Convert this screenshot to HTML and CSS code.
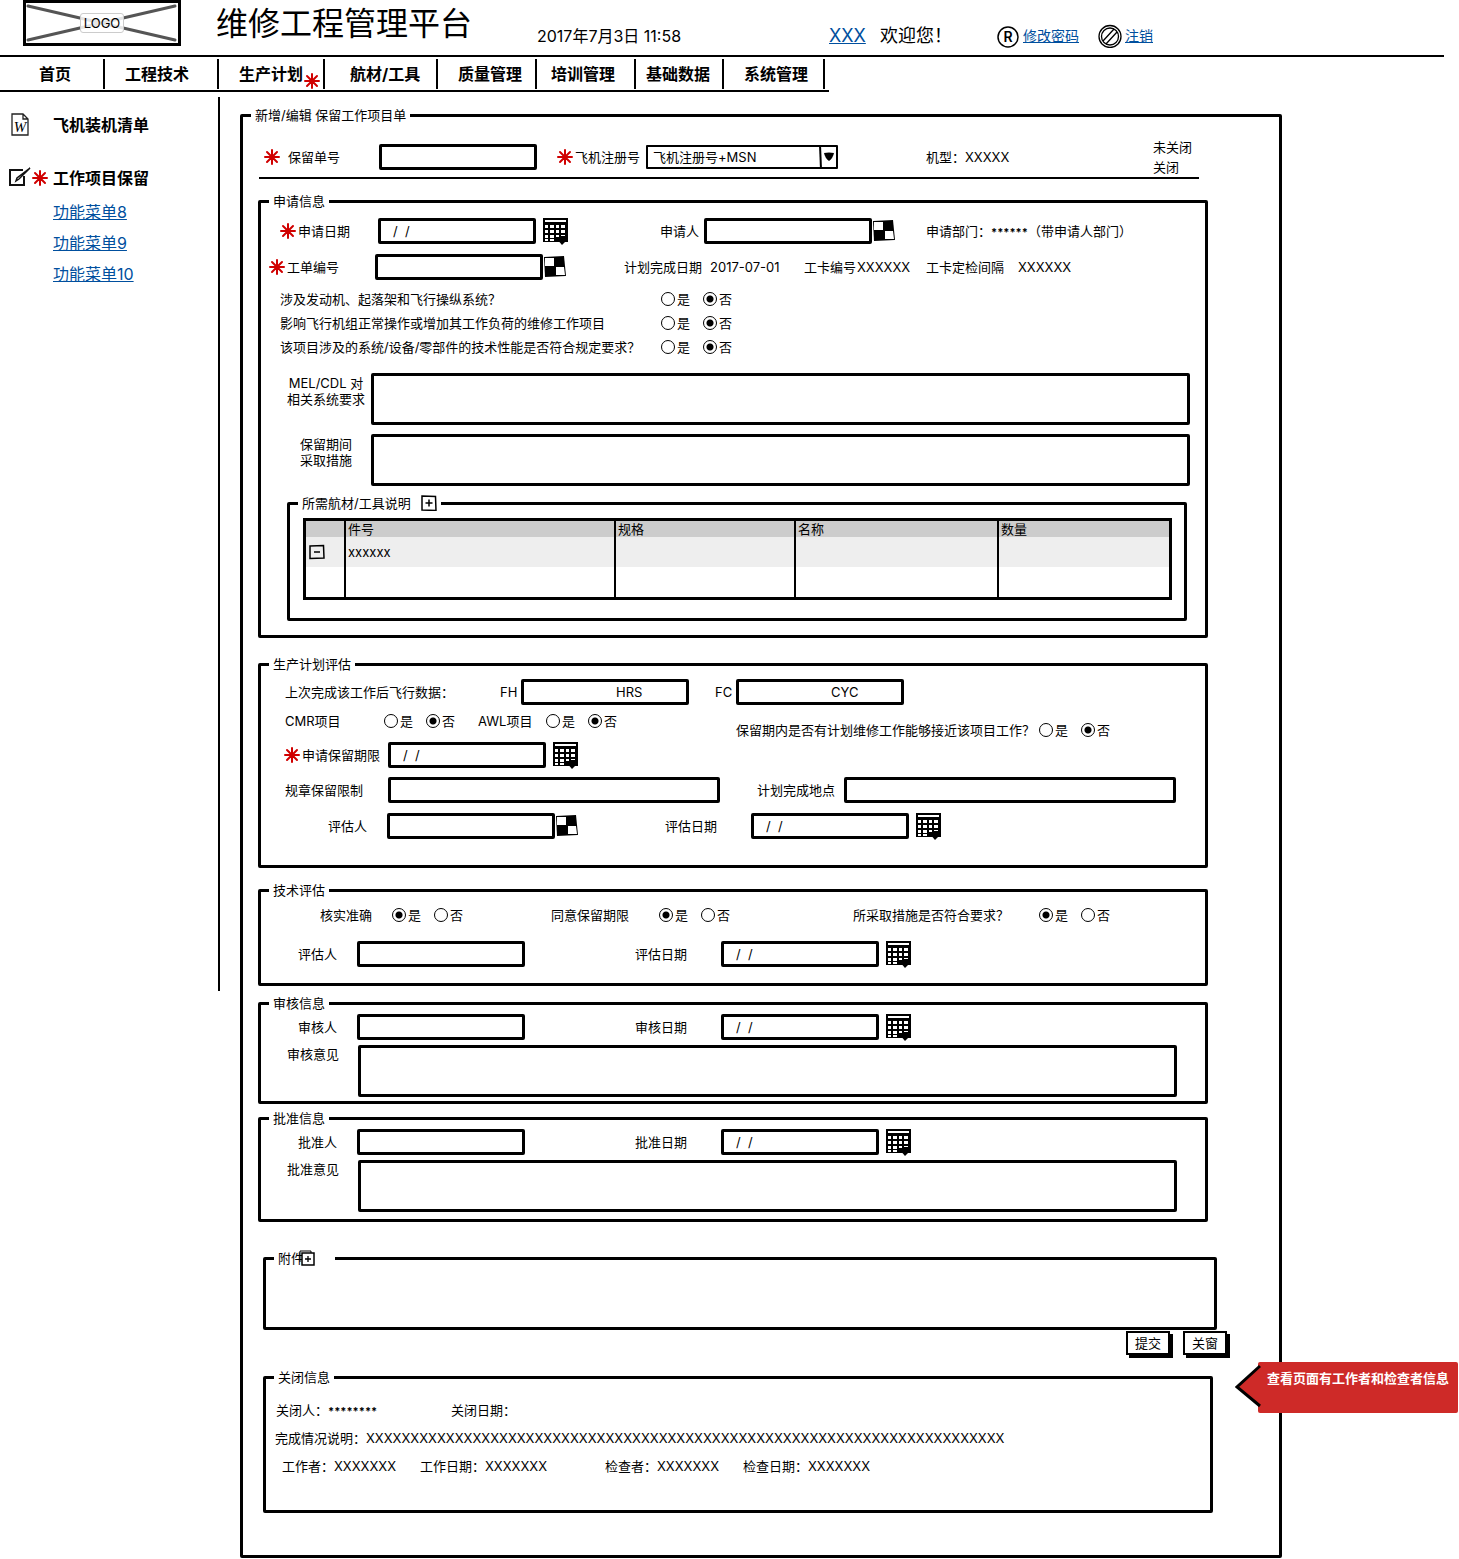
FILE: index.html
```html
<!DOCTYPE html>
<html lang="zh-CN">
<head>
<meta charset="utf-8">
<title>维修工程管理平台</title>
<link rel="stylesheet" href="styles.css">
</head>
<body>
<svg class="defs" aria-hidden="true">
  <symbol id="star" viewBox="0 0 16 16"><path d="M8 1v14M1 8h14M3 3l10 10M13 3L3 13" fill="none" stroke="#d00000" stroke-width="2" stroke-linecap="round"/></symbol>
  <symbol id="calendar" viewBox="0 0 26 28">
    <path d="M0 1h25v24H0z" fill="#000"/>
    <path d="M2 3h21v2H2z" fill="#fff"/>
    <path d="M2 8h3v3H2zM7 8h4v3H7zM13 8h3v3h-3zM18 8h4v3h-4zM2 13h3v3H2zM7 13h4v3H7zM13 13h3v3h-3zM18 13h4v3h-4zM2 18h3v3H2zM7 18h4v3H7zM13 18h3v2h-3zM18 18h4v1h-4zM2 22h3v2H2zM7 22h4v2H7z" fill="#fff"/>
    <path d="M13 21l8-2 4 3-6 6z" fill="#000"/>
  </symbol>
  <symbol id="checker" viewBox="0 0 22 22">
    <path d="M0 1l20-1 2 20-21 1z" fill="#000"/>
    <path d="M1 2h9v8H1zM12 11h8l1 8h-9z" fill="#fff"/>
  </symbol>
  <symbol id="plus" viewBox="0 0 16 16"><path d="M1 1l13.500.5.5 14-14-.5zM8 4.500v7M4.500 8h7" fill="none" stroke="#000" stroke-width="1.500"/></symbol>
  <symbol id="minus" viewBox="0 0 16 16"><path d="M1 2l13.500-.5.5 12.500-14 .5zM5 8h6" fill="none" stroke="#000" stroke-width="1.500"/></symbol>
</svg>

<header class="top">
  <div class="logo">
    <svg viewBox="0 0 158 46" preserveAspectRatio="none" aria-hidden="true">
      <rect x="1.500" y="1.500" width="155" height="43" fill="#fff" stroke="#000" stroke-width="3"/>
      <path d="M5 6l147 34M5 40L152 6" stroke="#555" stroke-width="3" stroke-linecap="round"/>
    </svg>
    <span>LOGO</span>
  </div>
  <h1>维修工程管理平台</h1>
  <time>2017年7月3日 11:58</time>
  <a class="user" href="#">XXX</a>
  <span class="welcome">欢迎您！</span>
  <svg class="round" viewBox="0 0 24 24" aria-hidden="true"><circle cx="11" cy="13" r="10" fill="none" stroke="#000" stroke-width="1.500"/><text x="11" y="18" text-anchor="middle" font-size="14" font-weight="600">R</text></svg>
  <a class="action" href="#">修改密码</a>
  <svg class="round" viewBox="0 0 24 24" aria-hidden="true"><g fill="none" stroke="#000" stroke-width="1.300"><circle cx="12" cy="12.500" r="11"/><circle cx="12" cy="12.500" r="8.500"/><path d="M5 17L16 5M8 20L19 8"/></g></svg>
  <a class="action" href="#">注销</a>
</header>

<nav class="menu">
  <a href="#">首页</a>
  <a href="#">工程技术</a>
  <a href="#">生产计划<svg class="star mark"><use href="#star"/></svg></a>
  <a href="#">航材/工具</a>
  <a href="#">质量管理</a>
  <a href="#">培训管理</a>
  <a href="#">基础数据</a>
  <a href="#">系统管理</a>
</nav>

<div class="body">
  <aside class="side">
    <div class="side-item">
      <svg class="side-icon" viewBox="0 0 24 24" aria-hidden="true"><path d="M4 1h11l5 5v16H4zM15 1v5h5" fill="none" stroke="#222" stroke-width="1.300"/><text x="12" y="19" text-anchor="middle" font-size="15" font-style="italic" font-family="Liberation Serif, serif">W</text></svg>
      <b>飞机装机清单</b>
    </div>
    <div class="side-item">
      <svg class="side-icon" viewBox="0 0 24 24" aria-hidden="true"><path d="M15 4H2v15h14v-9" fill="none" stroke="#111" stroke-width="2"/><path d="M22 2L11 13l-3 2 1-3z" fill="none" stroke="#111" stroke-width="1.500"/></svg>
      <svg class="star"><use href="#star"/></svg>
      <b>工作项目保留</b>
    </div>
    <a href="#">功能菜单8</a>
    <a href="#">功能菜单9</a>
    <a href="#">功能菜单10</a>
  </aside>

  <form class="main">
    <fieldset class="sheet">
      <legend>新增/编辑 保留工作项目单</legend>

      <div class="row summary">
        <label class="req wide" for="no"><svg class="star"><use href="#star"/></svg>保留单号</label>
        <input id="no" class="w-date" type="text">
        <label class="req" for="reg"><svg class="star"><use href="#star"/></svg>飞机注册号</label>
        <span class="select">
          <select id="reg"><option>飞机注册号+MSN</option></select>
          <svg viewBox="0 0 19 24" aria-hidden="true"><path d="M1 0l1 24" stroke="#000" stroke-width="2"/><path d="M5 8q5-1 10 0-1 5-5 8-4-3-5-8z"/></svg>
        </span>
        <span>机型：XXXXX</span>
        <span class="status">未关闭<br>关闭</span>
      </div>

      <fieldset class="panel apply">
        <legend>申请信息</legend>
        <div class="row apply-date">
          <label class="req" for="ad"><svg class="star"><use href="#star"/></svg>申请日期</label>
          <input id="ad" class="w-date" type="text" value="/  /">
          <button type="button" class="icon" aria-label="选择日期"><svg class="cal"><use href="#calendar"/></svg></button>
          <label for="ap">申请人</label>
          <input id="ap" class="w-text" type="text">
          <button type="button" class="icon" aria-label="选择人员"><svg class="chk"><use href="#checker"/></svg></button>
          <span>申请部门：<b class="masked">******</b>（带申请人部门）</span>
        </div>
        <div class="row apply-order">
          <label class="req" for="on"><svg class="star"><use href="#star"/></svg>工单编号</label>
          <input id="on" class="w-text" type="text">
          <button type="button" class="icon" aria-label="选择工单"><svg class="chk"><use href="#checker"/></svg></button>
          <span>计划完成日期</span><span>2017-07-01</span>
          <span>工卡编号</span><span>XXXXXX</span>
          <span>工卡定检间隔</span><span>XXXXXX</span>
        </div>
        <div class="questions">
          <div class="row question"><span>涉及发动机、起落架和飞行操纵系统？</span>
            <span class="yn"><label><input type="radio" name="q1">是</label><label><input type="radio" name="q1" checked>否</label></span></div>
          <div class="row question"><span>影响飞行机组正常操作或增加其工作负荷的维修工作项目</span>
            <span class="yn"><label><input type="radio" name="q2">是</label><label><input type="radio" name="q2" checked>否</label></span></div>
          <div class="row question"><span>该项目涉及的系统/设备/零部件的技术性能是否符合规定要求？</span>
            <span class="yn"><label><input type="radio" name="q3">是</label><label><input type="radio" name="q3" checked>否</label></span></div>
        </div>
        <div class="notes">
          <label for="mel">MEL/CDL 对<br>相关系统要求</label><textarea id="mel"></textarea>
          <label for="act">保留期间<br>采取措施</label><textarea id="act"></textarea>
        </div>
        <fieldset class="parts">
          <legend>所需航材/工具说明<button type="button" class="icon" aria-label="添加"><svg class="sq"><use href="#plus"/></svg></button></legend>
          <div class="parts-list">
            <table>
              <colgroup><col class="c-op"><col class="c-no"><col class="c-spec"><col class="c-name"><col></colgroup>
              <thead><tr><th></th><th>件号</th><th>规格</th><th>名称</th><th>数量</th></tr></thead>
              <tbody>
                <tr class="shade"><td class="op"><button type="button" class="icon" aria-label="删除"><svg class="sq"><use href="#minus"/></svg></button></td><td>xxxxxx</td><td></td><td></td><td></td></tr>
                <tr><td></td><td></td><td></td><td></td><td></td></tr>
              </tbody>
            </table>
          </div>
        </fieldset>
      </fieldset>

      <fieldset class="panel plan">
        <legend>生产计划评估</legend>
        <div class="row flight">
          <span>上次完成该工作后飞行数据：</span>
          <label for="fh">FH</label><input id="fh" class="w-text unit" type="text" value="HRS">
          <label for="fc">FC</label><input id="fc" class="w-text unit" type="text" value="CYC">
        </div>
        <div class="split">
          <div class="split-left">
            <div class="row cmr">
              <span>CMR项目</span>
              <span class="yn"><label><input type="radio" name="cmr">是</label><label><input type="radio" name="cmr" checked>否</label></span>
              <span>AWL项目</span>
              <span class="yn"><label><input type="radio" name="awl">是</label><label><input type="radio" name="awl" checked>否</label></span>
            </div>
            <div class="row limit">
              <label class="req" for="lim"><svg class="star"><use href="#star"/></svg>申请保留期限</label>
              <input id="lim" class="w-date" type="text" value="/  /">
              <button type="button" class="icon" aria-label="选择日期"><svg class="cal"><use href="#calendar"/></svg></button>
            </div>
          </div>
          <div class="split-right">
            <span>保留期内是否有计划维修工作能够接近该项目工作？</span>
            <span class="yn"><label><input type="radio" name="near">是</label><label><input type="radio" name="near" checked>否</label></span>
          </div>
        </div>
        <div class="row rule">
          <label for="rule">规章保留限制</label><input id="rule" class="w-long" type="text">
          <label for="place">计划完成地点</label><input id="place" class="w-full" type="text">
        </div>
        <div class="row assess">
          <label for="as1">评估人</label><input id="as1" class="w-text" type="text">
          <button type="button" class="icon" aria-label="选择人员"><svg class="chk"><use href="#checker"/></svg></button>
          <label for="as2">评估日期</label><input id="as2" class="w-date" type="text" value="/  /">
          <button type="button" class="icon" aria-label="选择日期"><svg class="cal"><use href="#calendar"/></svg></button>
        </div>
      </fieldset>

      <fieldset class="panel tech">
        <legend>技术评估</legend>
        <div class="row checks">
          <span>核实准确</span>
          <span class="yn"><label><input type="radio" name="t1" checked>是</label><label><input type="radio" name="t1">否</label></span>
          <span>同意保留期限</span>
          <span class="yn"><label><input type="radio" name="t2" checked>是</label><label><input type="radio" name="t2">否</label></span>
          <span>所采取措施是否符合要求？</span>
          <span class="yn"><label><input type="radio" name="t3" checked>是</label><label><input type="radio" name="t3">否</label></span>
        </div>
        <div class="row signer">
          <label for="te1">评估人</label><input id="te1" class="w-text" type="text">
          <label for="te2">评估日期</label><input id="te2" class="w-date" type="text" value="/  /">
          <button type="button" class="icon" aria-label="选择日期"><svg class="cal"><use href="#calendar"/></svg></button>
        </div>
      </fieldset>

      <fieldset class="panel review">
        <legend>审核信息</legend>
        <div class="row signer">
          <label for="rv1">审核人</label><input id="rv1" class="w-text" type="text">
          <label for="rv2">审核日期</label><input id="rv2" class="w-date" type="text" value="/  /">
          <button type="button" class="icon" aria-label="选择日期"><svg class="cal"><use href="#calendar"/></svg></button>
        </div>
        <div class="opinion"><label for="rv3">审核意见</label><textarea id="rv3"></textarea></div>
      </fieldset>

      <fieldset class="panel review approve">
        <legend>批准信息</legend>
        <div class="row signer">
          <label for="pz1">批准人</label><input id="pz1" class="w-text" type="text">
          <label for="pz2">批准日期</label><input id="pz2" class="w-date" type="text" value="/  /">
          <button type="button" class="icon" aria-label="选择日期"><svg class="cal"><use href="#calendar"/></svg></button>
        </div>
        <div class="opinion"><label for="pz3">批准意见</label><textarea id="pz3"></textarea></div>
      </fieldset>

      <fieldset class="panel attach">
        <legend>附件<button type="button" class="icon" aria-label="添加附件"><svg class="sq" viewBox="0 0 16 16"><path d="M1 12V1h11v2" fill="none" stroke="#000"/><path d="M3 3h12v12H3z" fill="#fff" stroke="#000" stroke-width="1.500"/><path d="M9 6v6M6 9h6" stroke="#000" stroke-width="1.300"/></svg></button></legend>
      </fieldset>

      <div class="buttons">
        <button type="button">提交</button>
        <button type="button">关窗</button>
      </div>

      <div class="closing">
        <fieldset class="panel close-info">
          <legend>关闭信息</legend>
          <div class="row closer"><span>关闭人：<b class="masked">********</b></span><span>关闭日期：</span></div>
          <div class="row result"><span>完成情况说明：XXXXXXXXXXXXXXXXXXXXXXXXXXXXXXXXXXXXXXXXXXXXXXXXXXXXXXXXXXXXXXXXXXXXXXXX</span></div>
          <div class="row workers"><span>工作者：XXXXXXX</span><span>工作日期：XXXXXXX</span><span>检查者：XXXXXXX</span><span>检查日期：XXXXXXX</span></div>
        </fieldset>
        <div class="callout">
          <svg viewBox="0 0 26 44" aria-hidden="true"><path d="M25 2L2 23l23 19z" fill="#ce2a28"/><path d="M25 2L2 23l23 19" fill="none" stroke="#000" stroke-width="3"/></svg>
          查看页面有工作者和检查者信息
        </div>
      </div>
    </fieldset>
  </form>
</div>
</body>
</html>
```
FILE: styles.css
```css
* { box-sizing: border-box; }

body {
  margin: 0;
  background: #fff;
  color: #000;
  font: 13px/18px Inter, "Noto Sans CJK SC", sans-serif;
}

input, select, textarea, button {
  margin: 0;
  font: inherit;
  color: inherit;
}

a { color: #004f9e; }
svg { display: block; }
.defs { position: absolute; width: 0; height: 0; }
.star { flex: none; width: 16px; height: 16px; }

/* header */
.top {
  display: grid;
  grid-template-columns: 193px 321px 292px 51px 117px 26px 75px 27px auto;
  justify-items: start;
  align-items: end;
  height: 57px;
  margin-right: 15px;
  padding: 0 0 8px 23px;
  border-bottom: 2px solid #000;
  line-height: 24px;
  white-space: nowrap;
}
.logo {
  display: grid;
  place-items: center;
  width: 158px;
  height: 46px;
}
.logo svg, .logo span { grid-area: 1 / 1; }
.logo svg { width: 158px; height: 46px; }
.logo span {
  position: relative;
  padding: 0 3px;
  border: 1px solid #ccc;
  border-radius: 3px;
  background: rgba(255, 255, 255, .85);
  line-height: 18px;
}
h1 {
  margin: 0;
  font-size: 32px;
  font-weight: 400;
  line-height: 48px;
}
time { font-size: 16px; }
.user, .welcome { font-size: 18px; }
.action { font-size: 14px; }
.round { width: 24px; height: 24px; }
.top .logo, .top h1 { align-self: start; }

/* menu */
.menu {
  display: grid;
  grid-template-columns: 105px 114px 106px 113px 99px 99px 88px 101px;
  width: 829px;
  height: 35px;
  padding-top: 2px;
  border-bottom: 2px solid #000;
}
.menu a {
  position: relative;
  height: 30px;
  padding-left: 20px;
  border-right: 2px solid #000;
  color: #000;
  font-size: 16px;
  font-weight: 700;
  line-height: 30px;
  text-decoration: none;
  white-space: nowrap;
}
.menu a:nth-child(1) { padding-left: 39px; }
.menu a:nth-child(4) { padding-left: 25px; }
.menu a:nth-child(6) { padding-left: 14px; }
.menu a:nth-child(7) { padding-left: 10px; }
.mark { position: absolute; right: 3px; bottom: 0; }

/* side column */
.body { display: flex; align-items: flex-start; }
.side {
  flex: none;
  width: 220px;
  height: 894px;
  margin-top: 5px;
  padding-top: 15px;
  border-right: 2px solid #000;
  font-size: 16px;
}
.side-item {
  display: flex;
  align-items: center;
  height: 26px;
  margin-bottom: 27px;
  padding-left: 8px;
}
.side-item b { margin-left: auto; width: 165px; }
.side-icon { width: 24px; height: 24px; }
.side > a {
  display: block;
  width: max-content;
  margin: 0 0 7px 53px;
  line-height: 24px;
}
.side-item + a { margin-top: -18px; }

/* form sheet */
.main { flex: 1; min-width: 0; margin: 14px 177px 0 20px; }
fieldset {
  min-width: 0;
  margin: 0;
  padding: 0;
  border: 3px solid #000;
  border-radius: 2px;
}
legend {
  display: flex;
  height: 18px;
  margin-left: 8px;
  padding: 0 4px;
}
.sheet { padding-bottom: 42px; }
.row {
  display: grid;
  justify-items: start;
  align-items: center;
  height: 26px;
  white-space: nowrap;
}
.panel { margin: 13px 71px 0 15px; }

.req { display: flex; align-items: center; gap: 2px; }
.req.wide { gap: 8px; }

input[type="text"], textarea {
  height: 26px;
  padding: 0 12px;
  border: 3px solid #000;
  border-radius: 2px;
  background: #fff;
}
textarea { display: block; width: 100%; height: 52px; resize: none; }
.w-date { width: 158px; }
.w-text { width: 168px; }
.w-long { width: 332px; }
.w-full { width: 100%; }
input[type="text"].unit { padding-left: 92px; }

.icon { display: block; padding: 0; border: 0; background: none; }
.cal { width: 26px; height: 28px; }
.chk { width: 22px; height: 22px; }
.sq { width: 16px; height: 16px; }
.masked { font-size: 11px; }

.select { position: relative; width: 192px; }
.select select {
  display: block;
  width: 100%;
  height: 24px;
  padding: 0 24px 0 5px;
  border: 2px solid #000;
  border-radius: 1px;
  appearance: none;
  background: #fff;
}
.select svg {
  position: absolute;
  top: 0;
  right: 0;
  width: 19px;
  height: 24px;
  pointer-events: none;
}

.yn { display: flex; gap: 13px; }
.yn label { display: flex; align-items: center; gap: 2px; }
.yn input {
  width: 14px;
  height: 14px;
  border: 1px solid #000;
  border-radius: 50%;
  appearance: none;
}
.yn input:checked { background: radial-gradient(circle, #000 3px, #fff 4px); }

.summary {
  grid-template-columns: 115px 178px 89px 280px 227px auto;
  height: 55px;
  margin: 0 80px 0 16px;
  padding: 13px 0 0 5px;
  border-bottom: 2px solid #000;
}
.status { line-height: 20px; }

.apply { padding-bottom: 14px; }
.apply-date {
  grid-template-columns: 98px 165px 117px 44px 169px 53px auto;
  margin-top: 7px;
  padding-left: 19px;
}
.apply-order {
  grid-template-columns: 106px 169px 80px 86px 94px 53px 69px 92px auto;
  margin-top: 11px;
  padding-left: 8px;
}
.questions { margin-top: 7px; }
.question { grid-template-columns: 381px auto; height: 24px; padding-left: 19px; }
.notes {
  display: grid;
  grid-template-columns: 78px 1fr;
  gap: 9px 6px;
  margin: 14px 15px 0 26px;
}
.notes label { padding-top: 2px; line-height: 16px; text-align: center; white-space: nowrap; }

.parts { margin: 8px 18px 0 26px; }
.parts legend { gap: 10px; align-items: center; }
.parts-list { padding: 6px 12px 18px 13px; }
table {
  width: 100%;
  border: 3px solid #000;
  border-spacing: 0;
  table-layout: fixed;
}
th, td { height: 30px; padding: 0 2px; border-right: 2px solid #000; }
th {
  height: 16px;
  background: #ccc;
  font-weight: 400;
  line-height: 16px;
  text-align: left;
}
th:last-child, td:last-child { border-right: 0; }
.shade td { background: #eee; }
td.op { padding-left: 3px; }
.c-op { width: 40px; }
.c-no { width: 270px; }
.c-spec { width: 180px; }
.c-name { width: 203px; }

.plan { margin-top: 17px; padding-bottom: 27px; }
.flight {
  grid-template-columns: 215px 21px 194px 21px auto;
  margin-top: 6px;
  padding-left: 24px;
}
.split { display: flex; align-items: flex-start; margin-top: 4px; }
.split-left { flex: none; width: 475px; }
.split-right {
  display: grid;
  grid-template-columns: 303px auto;
  align-items: center;
  height: 24px;
  margin-top: 9px;
  white-space: nowrap;
}
.cmr { grid-template-columns: 99px 94px 68px auto; height: 24px; padding-left: 24px; }
.limit { grid-template-columns: 104px 165px auto; margin-top: 8px; padding-left: 23px; }
.rule {
  grid-template-columns: 103px 369px 87px 1fr;
  margin-top: 10px;
  padding: 0 29px 0 24px;
}
.assess {
  grid-template-columns: 59px 169px 109px 86px 165px auto;
  margin-top: 9px;
  padding-left: 67px;
}

.tech { padding-bottom: 17px; }
.checks {
  grid-template-columns: 72px 159px 108px 194px 186px auto;
  height: 24px;
  margin: 4px 0 13px;
  padding-left: 59px;
}
.signer { grid-template-columns: 59px 278px 86px 165px auto; padding-left: 37px; }

.review { margin-top: 8px; padding-bottom: 4px; }
.review .signer { margin-top: 1px; }
.opinion {
  display: grid;
  grid-template-columns: 71px 1fr;
  margin: 6px 28px 0 26px;
}
.approve { margin-top: 5px; padding-bottom: 7px; }

.attach { min-height: 81px; margin: 27px 62px 0 20px; }
.attach legend { width: 61px; align-items: center; }
.attach .icon { margin-left: -5px; }

.buttons {
  display: flex;
  justify-content: flex-end;
  gap: 13px;
  margin: 1px 52px 0 0;
}
.buttons button {
  width: 44px;
  height: 24px;
  padding: 0;
  border: 2px solid #000;
  background: #fff;
  box-shadow: 3px 3px 0 #000;
}

.closing { position: relative; margin: 13px 66px 0 20px; }
.close-info { margin: 0; padding-bottom: 30px; }
.close-info .row { height: 28px; }
.closer { grid-template-columns: 175px auto; margin-top: 10px; padding-left: 10px; }
.result { padding-left: 9px; }
.workers { grid-template-columns: 138px 185px 138px auto; padding-left: 16px; }

.callout {
  position: absolute;
  top: -6px;
  right: -245px;
  width: 200px;
  height: 51px;
  padding: 7px 9px;
  border-radius: 2px;
  background: #ce2a28;
  color: #fff;
  font-weight: 700;
  white-space: nowrap;
}
.callout svg {
  position: absolute;
  top: 2px;
  left: -23px;
  width: 26px;
  height: 44px;
}
```
